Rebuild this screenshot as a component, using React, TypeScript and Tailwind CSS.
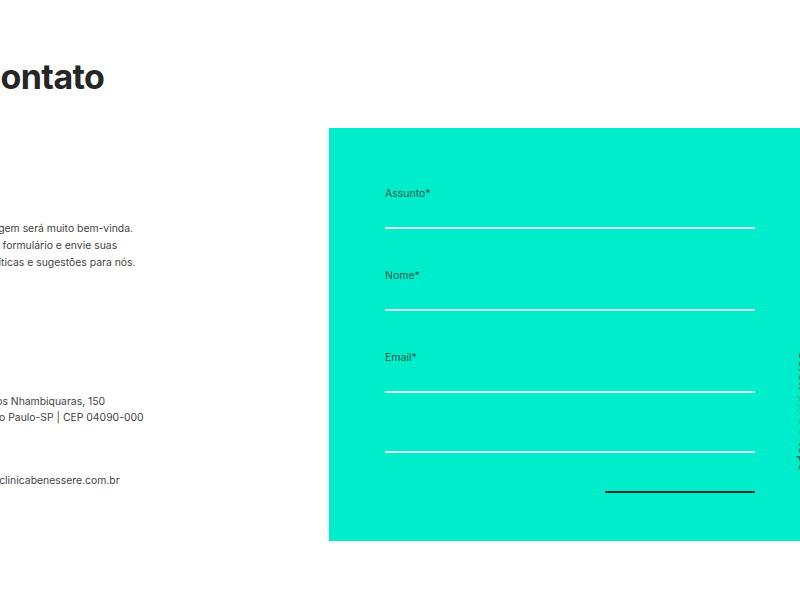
import React from "react";

const fields = ["Assunto*", "Nome*", "Email*"];

export default function App() {
  return (
    <div className="relative w-[800px] h-[600px] overflow-hidden bg-white font-['Inter',sans-serif] text-[#3a3a3a]">
      <div className="flex h-full">
        {/* left column: heading and contact details */}
        <div className="w-[329px] shrink-0 overflow-hidden">
          <h1 className="ml-[-24px] mt-[53px] text-[34px] leading-[48px] font-bold tracking-[-0.6px] text-[#262626]">
            Contato
          </h1>
          <p className="ml-[-56px] mt-[119px] text-[10.4px] leading-[17px] text-[#444]">
            Sua mensagem será muito bem-vinda.
            <br />
            Preencha o formulário e envie suas
            <br />
            dúvidas, críticas e sugestões para nós.
          </p>
          <p className="ml-[-56px] mt-[123px] text-[10.4px] leading-[16px] text-[#444]">
            Alameda dos Nhambiquaras, 150
            <br />
            Moema, São Paulo-SP | CEP 04090-000
          </p>
          <p className="ml-[-48px] mt-[46px] text-[10.4px] leading-[17px] text-[#444]">
            contato@clinicabenessere.com.br
          </p>
        </div>

        {/* form panel */}
        <div className="relative mt-[128px] h-[413px] flex-1 bg-[#00edcb] pl-[56px] pr-[45px] pt-[59px]">
          <form className="flex flex-col">
            {fields.map((f, i) => (
              <label key={f} className={`flex flex-col ${i < 2 ? "mb-[40px]" : ""}`}>
                <span className="text-[10.5px] leading-[14px] text-[#17574a]">{f}</span>
                <input
                  className="mt-[4px] h-[24px] bg-transparent outline-none border-b-[2px] border-[#d8fff6]"
                  aria-label={f}
                />
              </label>
            ))}
            <textarea
              aria-label="Mensagem"
              className="h-[60px] resize-none bg-transparent outline-none border-b-[2px] border-[#d8fff6]"
            />
            <div className="mt-[38px] flex justify-end">
              <button type="button" className="w-[150px] h-[2px] bg-[#10322b]" />
            </div>
          </form>
          <div className="absolute left-[467px] top-[224px] [writing-mode:vertical-rl] text-[11px] leading-[14px] tracking-[1.5px] font-semibold text-[#17574a]">
            Scroll <span className="text-[#2fbfa6]">para o</span> topo
          </div>
        </div>
      </div>
    </div>
  );
}
